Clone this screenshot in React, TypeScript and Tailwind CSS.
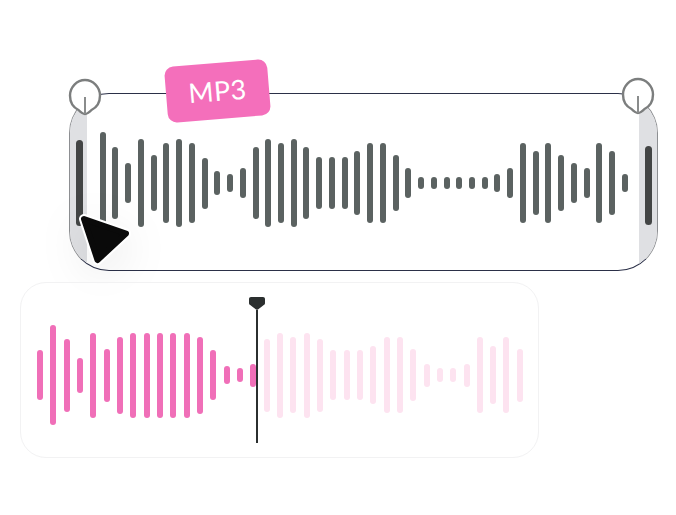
const topBars = [102, 72, 40, 88, 56, 80, 88, 80, 51, 24, 18, 30, 72, 88, 80, 88, 72, 52, 52, 52, 64, 80, 80, 56, 30, 12, 12, 12, 12, 12, 12, 18, 30, 80, 64, 80, 56, 40, 30, 80, 64, 18];
const pinkBars = [50, 100, 73, 35, 85, 53, 77, 85, 85, 85, 85, 85, 77, 50, 18, 14, 23];
const lightBars = [73, 85, 76, 85, 73, 50, 50, 50, 58, 76, 76, 52, 23, 14, 14, 23, 76, 58, 76, 53];

function Handle() {
  return (
    <svg width="34" height="38" viewBox="0 0 34 38" fill="none">
      <path d="M17 36 C14.5 36 12.5 34 10.5 32 C5.5 29.5 2 24.5 2 17.5 C2 9 9 2 17 2 C25 2 32 9 32 17.5 C32 24.5 28.5 29.5 23.5 32 C21.5 34 19.5 36 17 36 Z" fill="#ffffff" stroke="#7c7e7e" strokeWidth="2.4" />
      <path d="M17 19 V36" stroke="#8a8c8c" strokeWidth="2" />
    </svg>
  );
}

export default function App() {
  return (
    <div className="relative flex h-[515px] w-[676px] flex-col overflow-hidden bg-white pl-[20px] pt-[93px] font-['Lato',sans-serif]">
      <div className="relative ml-[49px] h-[178px] w-[589px] shrink-0">
        <div className="flex h-full w-full items-stretch overflow-hidden rounded-[40px] border border-[#2b3048] border-x-[#8d8f92] bg-white">
          <div className="flex w-[17px] shrink-0 items-center justify-start bg-[#dfe0e3] pl-[6px] pt-[2px]">
            <div className="h-[86px] w-[7px] rounded-full bg-[#434545]" />
          </div>
          <div className="flex flex-1 items-center gap-[6.74px] pl-[12.7px] pt-[2px]">
            {topBars.map((h, i) => (
              <div key={i} className="w-[6px] shrink-0 rounded-full bg-[#5b6261]" style={{ height: h }} />
            ))}
          </div>
          <div className="flex w-[18px] shrink-0 items-center justify-center bg-[#dfe0e3] pt-[7px]">
            <div className="h-[79px] w-[7px] rounded-full bg-[#434545]" />
          </div>
        </div>
        <div className="absolute left-[-1px] top-[-15px]"><Handle /></div>
        <div className="absolute left-[552px] top-[-16px]"><Handle /></div>
        <div className="absolute left-[97px] top-[-30px] flex h-[56px] w-[103px] -rotate-[4.7deg] items-center justify-center rounded-[9px] bg-[#f46fbb] text-[27px] font-normal tracking-[0.5px] text-white">
          MP3
        </div>
        <svg className="absolute left-[6px] top-[115px] drop-shadow-[0_12px_22px_rgba(0,0,0,0.09)]" width="62" height="66" viewBox="0 0 62 66" fill="none">
          <path d="M9 11 L51 25.5 L22.5 52 Z" fill="#ffffff" stroke="#ffffff" strokeWidth="10" strokeLinejoin="round" />
          <path d="M9 11 L51 25.5 L22.5 52 Z" fill="#0a0a0a" stroke="#0a0a0a" strokeWidth="6" strokeLinejoin="round" />
        </svg>
      </div>

      <div className="relative mt-[11px] flex h-[176px] w-[519px] shrink-0 items-center gap-[7.33px] rounded-[26px] border border-[#f2f2f3] bg-white/60 pl-[16px] pt-[10px]">
        {pinkBars.map((h, i) => (
          <div key={i} className="w-[6px] shrink-0 rounded-full bg-[#f06fb8]" style={{ height: h }} />
        ))}
        {lightBars.map((h, i) => (
          <div key={i} className="w-[6px] shrink-0 rounded-full bg-[#fde3f0]" style={{ height: h }} />
        ))}
        <div className="absolute left-[228px] top-[14px] flex flex-col items-center">
          <svg width="16" height="13" viewBox="0 0 16 13">
            <path d="M2 0 H14 C15.2 0 16 0.8 16 2 V6 C16 7 15.5 7.6 14.8 8 L9 12.4 C8.4 12.9 7.6 12.9 7 12.4 L1.2 8 C0.5 7.6 0 7 0 6 V2 C0 0.8 0.8 0 2 0 Z" fill="#2b2f2f" />
          </svg>
          <div className="h-[133px] w-[1.5px] bg-[#2b2f2f]" />
        </div>
      </div>
    </div>
  );
}
